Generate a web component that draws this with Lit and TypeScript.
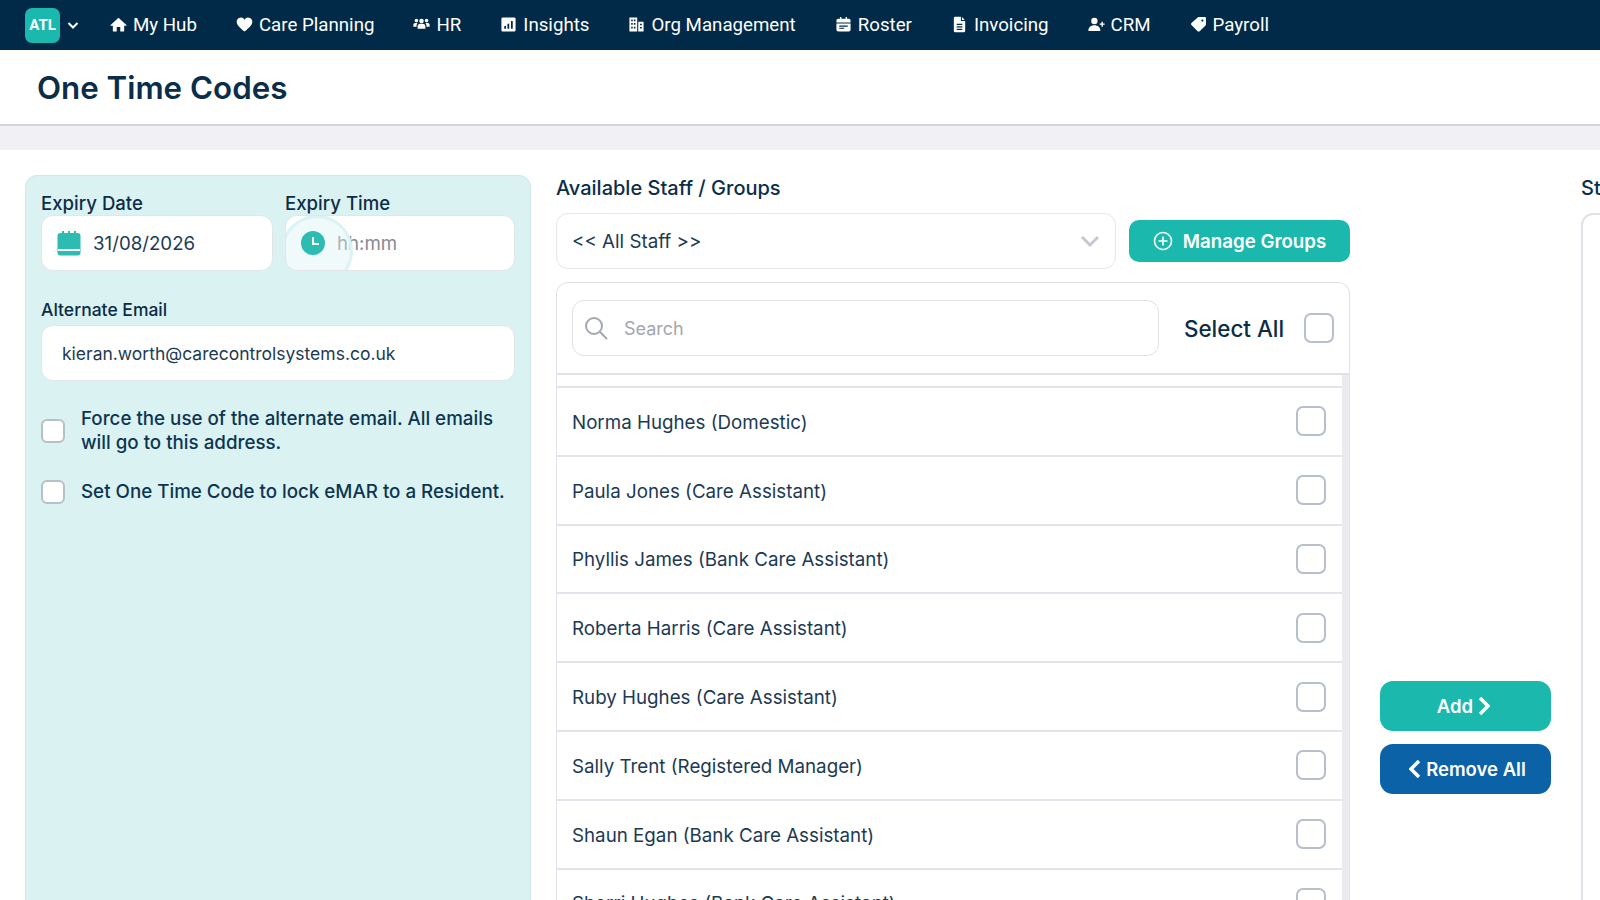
import { LitElement, html, css, svg } from 'lit';
import { customElement } from 'lit/decorators.js';

const navItems = [
  { label: 'My Hub', icon: svg`<path d="M12 2.500 0.800 12.600c-.4.400-.1 1 .4 1H4V21c0 .6.400 1 1 1h4.500v-6.500h5V22H19c.6 0 1-.4 1-1v-7.400h2.800c.5 0 .8-.6.400-1z"/>` },
  { label: 'Care Planning', icon: svg`<path d="M12 22C5 16.200 1 12.500 1 8a5.800 5.800 0 0 1 11-2.600A5.800 5.800 0 0 1 23 8c0 4.500-4 8.200-11 14z"/>` },
  { label: 'HR', icon: svg`<circle cx="12" cy="7" r="3.200"/><circle cx="4.800" cy="6.500" r="2.500"/><circle cx="19.200" cy="6.500" r="2.500"/><path d="M6.500 18v-3a4 4 0 0 1 4-4h3a4 4 0 0 1 4 4v3zM0.500 15v-2.500A2.500 2.500 0 0 1 3 10h3.500a5 5 0 0 0-1.500 3.500V15zM23.500 15v-2.500A2.500 2.500 0 0 0 21 10h-3.500a5 5 0 0 1 1.500 3.500V15z"/>` },
  { label: 'Insights', icon: svg`<path fill-rule="evenodd" d="M4 2h16a2 2 0 0 1 2 2v16a2 2 0 0 1-2 2H4a2 2 0 0 1-2-2V4a2 2 0 0 1 2-2zm2 12v4h2.500v-4zm4.500-3v7H13v-7zM15.500 7v11H18V7z"/>` },
  { label: 'Org Management', icon: svg`<path fill-rule="evenodd" d="M2 2h11v20H2zM14.500 8H22v14h-7.500zM4.500 5v2.500h2.200V5zm3.800 0v2.500h2.200V5zM4.500 10v2.500h2.200V10zm3.800 0v2.500h2.200V10zM4.500 15v2.500h2.200V15zm3.800 0v2.500h2.200V15zM17 11v2.200h2.500V11zm0 4.500v2.200h2.500v-2.200z"/>` },
  { label: 'Roster', icon: svg`<path fill-rule="evenodd" d="M7 1.500h2V4h6V1.500h2V4h2.500A2.500 2.500 0 0 1 22 6.500V9H2V6.500A2.500 2.500 0 0 1 4.500 4H7zM2 10.500h20V19.500a2.500 2.500 0 0 1-2.500 2.500h-15A2.500 2.500 0 0 1 2 19.500zM6 13.500V15h12v-1.500zm0 3V18h7v-1.500z"/>` },
  { label: 'Invoicing', icon: svg`<path fill-rule="evenodd" d="M6 1h8v6h6v14a2 2 0 0 1-2 2H6a2 2 0 0 1-2-2V3a2 2 0 0 1 2-2zm2 10v1.800h8V11zm0 3.500v1.800h8v-1.800zm0 3.500v1.800h8V18zM15.500 1.500 19.500 5.500h-4z"/>` },
  { label: 'CRM', icon: svg`<circle cx="9" cy="7" r="4.500"/><path d="M0.500 21c0-5 3.500-8 8.500-8s8.500 3 8.500 8zM19 8h2v2.500h2.500v2H21V15h-2v-2.500h-2.500v-2H19z"/>` },
  { label: 'Payroll', icon: svg`<path fill-rule="evenodd" d="M12.500 1.500H21a1.500 1.500 0 0 1 1.500 1.500v8.500c0 .8-.3 1.500-.9 2.100l-8 8a2 2 0 0 1-2.800 0L2 12.800a2 2 0 0 1 0-2.800l8.400-7.600c.6-.6 1.300-.9 2.100-.9zM17.500 5a1.500 1.500 0 1 0 0 3 1.500 1.500 0 0 0 0-3z"/>` },
];

const staff = [
  'Norma Hughes (Domestic)',
  'Paula Jones (Care Assistant)',
  'Phyllis James (Bank Care Assistant)',
  'Roberta Harris (Care Assistant)',
  'Ruby Hughes (Care Assistant)',
  'Sally Trent (Registered Manager)',
  'Shaun Egan (Bank Care Assistant)',
  'Sherri Hughes (Bank Care Assistant)',
];

@customElement('app-root')
export class AppRoot extends LitElement {
  static styles = css`
    :host {
      display: block;
      width: 1600px;
      height: 900px;
      overflow: hidden;
      background: #fff;
      color: #0c2d48;
      font-family: Inter, 'Noto Sans', sans-serif;
    }

    .nav {
      height: 50px;
      background: #002a47;
      display: flex;
      align-items: center;
      padding-left: 25px;
      font-family: Roboto, sans-serif;
      color: #fff;
    }

    .logo {
      width: 35px;
      height: 35px;
      border-radius: 7px;
      background: #1bb8ae;
      display: flex;
      align-items: center;
      justify-content: center;
      font-size: 15px;
      font-weight: 700;
    }

    .logo-caret {
      width: 12px;
      height: 12px;
      margin: 0 31px 0 7px;
      fill: none;
      stroke: #fff;
      stroke-width: 2;
    }

    .nav-items {
      display: flex;
      gap: 39px;
    }

    .nav-item {
      display: flex;
      align-items: center;
      gap: 6px;
      font-size: 18.7px;
      font-weight: 400;
      line-height: 24px;
    }

    .nav-item svg {
      width: 17px;
      height: 17px;
      fill: #fff;
      margin-top: -2px;
    }

    .title-bar {
      height: 74px;
      box-sizing: border-box;
      display: flex;
      align-items: center;
      padding: 2px 0 0 37px;
      font-family: Inter, sans-serif;
      font-size: 31.3px;
      font-weight: 600;
      color: #0c2d48;
    }

    .band {
      height: 26px;
      box-sizing: border-box;
      background: #f0f0f5;
      border-top: 2px solid #d3d4da;
    }

    .content {
      display: flex;
      padding: 25px 0 0 25px;
      height: 750px;
      box-sizing: border-box;
    }

    .panel {
      flex: 0 0 505px;
      box-sizing: border-box;
      height: 760px;
      background: #daf2f2;
      border: 1px solid #d0e8e9;
      border-radius: 12px;
      padding: 15px;
    }

    .date-row {
      display: grid;
      grid-template-columns: 232px 230px;
      gap: 12px;
    }

    .label {
      font-size: 18.6px;
      font-weight: 500;
      line-height: 24px;
      color: #0c2d48;
    }

    .field {
      height: 56px;
      box-sizing: border-box;
      background: #fff;
      border: 1px solid #e2e6ea;
      border-radius: 12px;
      display: flex;
      align-items: center;
      font-size: 18.7px;
      color: #1c3a54;
    }

    .date-field {
      padding-left: 15px;
      gap: 12px;
    }

    .date-field svg {
      width: 24px;
      height: 26px;
    }

    .time-field {
      padding-left: 15px;
      gap: 12px;
      position: relative;
      overflow: hidden;
      color: #868b91;
    }

    .time-field svg {
      width: 24px;
      height: 24px;
      position: relative;
      z-index: 1;
    }

    .ripple {
      position: absolute;
      left: -5px;
      top: -1px;
      width: 72px;
      height: 72px;
      box-sizing: border-box;
      border-radius: 50%;
      border: 3px solid rgba(218, 242, 242, 0.95);
      background: rgba(218, 242, 242, 0.4);
    }

    .email-label {
      margin-top: 27px;
      font-size: 17.5px;
    }

    .email-field {
      margin-top: 3px;
      padding-left: 20px;
      font-size: 17.5px;
    }

    .check-row {
      display: flex;
      gap: 16px;
      align-items: center;
      font-size: 18.75px;
      font-weight: 500;
      line-height: 23.5px;
      color: #0d3551;
    }

    .check-row.first {
      margin-top: 26px;
    }

    .check-row.second {
      margin-top: 26px;
    }

    .check {
      flex: none;
      width: 24px;
      height: 24px;
      box-sizing: border-box;
      background: #fff;
      border: 2px solid #b7bfcb;
      border-radius: 6px;
    }

    .check.large {
      width: 30px;
      height: 30px;
      border-radius: 7px;
    }

    .middle {
      flex: 0 0 794px;
      margin-left: 25px;
    }

    .col-label {
      font-size: 20px;
      font-weight: 500;
      line-height: 26px;
      color: #0c2d48;
    }

    .select-row {
      display: flex;
      align-items: center;
      gap: 13px;
      margin-top: 12px;
    }

    .select {
      flex: 1;
      height: 56px;
      box-sizing: border-box;
      border: 1px solid #e4e6ec;
      border-radius: 12px;
      display: flex;
      align-items: center;
      justify-content: space-between;
      padding: 0 15px;
      font-size: 18.75px;
      color: #1c3a54;
    }

    .select svg {
      width: 20px;
      height: 14px;
      fill: none;
      stroke: #c3c8d1;
      stroke-width: 3;
    }

    .manage {
      flex: 0 0 221px;
      height: 42px;
      background: #1bb8ae;
      border-radius: 10px;
      color: #fff;
      font-size: 18.7px;
      font-weight: 600;
      display: flex;
      align-items: center;
      justify-content: center;
      gap: 10px;
    }

    .manage svg {
      width: 20px;
      height: 20px;
      fill: none;
      stroke: #fff;
      stroke-width: 1.6;
    }

    .list {
      margin-top: 13px;
      border: 1px solid #e0e2e8;
      border-radius: 12px 12px 0 0;
      border-bottom: none;
    }

    .list-head {
      height: 92px;
      box-sizing: border-box;
      border-bottom: 2px solid #e0e2e8;
      display: flex;
      align-items: center;
      padding: 0 15px;
    }

    .search {
      flex: 0 0 587px;
      box-sizing: border-box;
      height: 56px;
      border: 1px solid #e0e2e8;
      border-radius: 12px;
      display: flex;
      align-items: center;
      gap: 16px;
      padding-left: 11px;
      font-size: 18px;
      color: #a2a7b0;
    }

    .search svg {
      width: 24px;
      height: 24px;
      fill: none;
      stroke: #a2a7b0;
      stroke-width: 2;
    }

    .select-all {
      margin-left: 25px;
      flex: 1;
      display: flex;
      align-items: center;
      justify-content: space-between;
      font-size: 22.4px;
      font-weight: 500;
      color: #0c2d48;
    }

    .list-body {
      display: flex;
    }

    .rows {
      flex: 1;
      padding-top: 11px;
    }

    .row {
      height: 68.8px;
      box-sizing: border-box;
      border-top: 2px solid #e2e4ea;
      display: flex;
      align-items: center;
      justify-content: space-between;
      padding: 0 16px 0 15px;
      font-size: 18.75px;
      color: #1c3a54;
    }

    .row span {
      margin-top: 2px;
    }

    .scrollbar {
      flex: 0 0 7px;
      background: #eaeaf1;
    }

    .actions {
      flex: 0 0 171px;
      margin-left: 30px;
      padding-top: 506px;
      display: flex;
      flex-direction: column;
      gap: 13px;
    }

    .action {
      height: 50px;
      border-radius: 13px;
      color: #fff;
      font-size: 18.5px;
      font-weight: 600;
      display: flex;
      align-items: center;
      justify-content: center;
      gap: 5px;
    }

    .action svg {
      width: 12px;
      height: 20px;
      fill: none;
      stroke: #fff;
      stroke-width: 3.5;
    }

    .add {
      background: #1bb8ae;
      padding-right: 4px;
    }

    .remove {
      background: #0b62a6;
      padding-left: 4px;
    }

    .selected {
      flex: 0 0 400px;
      margin-left: 30px;
    }

    .selected-box {
      margin-top: 12px;
      height: 700px;
      border: 2px solid #e0e2e8;
      border-radius: 12px;
    }
  `;

  render() {
    return html`
      <div class="nav">
        <div class="logo">ATL</div>
        <svg class="logo-caret" viewBox="0 0 12 12"><path d="M1.500 4 6 8.500 10.500 4" /></svg>
        <div class="nav-items">
          ${navItems.map(
            (item) => html`
              <div class="nav-item">
                <svg viewBox="0 0 24 24">${item.icon}</svg>
                <span>${item.label}</span>
              </div>
            `
          )}
        </div>
      </div>

      <div class="title-bar">One Time Codes</div>
      <div class="band"></div>

      <div class="content">
        <div class="panel">
          <div class="date-row">
            <div>
              <div class="label">Expiry Date</div>
              <div class="field date-field">
                <svg viewBox="0 0 24 26">
                  <rect x="0.500" y="3" width="23" height="22.500" rx="3" fill="#2cbcb1" />
                  <path d="M6 1v5M12 1v5M18 1v5" stroke="#2cbcb1" stroke-width="2" />
                  <path d="M1 20h22" stroke="#fff" stroke-width="2" />
                </svg>
                <span>31/08/2026</span>
              </div>
            </div>
            <div>
              <div class="label">Expiry Time</div>
              <div class="field time-field">
                <svg viewBox="0 0 24 24">
                  <circle cx="12" cy="12" r="12" fill="#2cbcb1" />
                  <path d="M12 6v7h6" fill="none" stroke="#fff" stroke-width="2" />
                </svg>
                <span>hh:mm</span>
                <div class="ripple"></div>
              </div>
            </div>
          </div>

          <div class="label email-label">Alternate Email</div>
          <div class="field email-field">kieran.worth@carecontrolsystems.co.uk</div>

          <div class="check-row first">
            <div class="check"></div>
            <div>Force the use of the alternate email. All emails will go to this address.</div>
          </div>
          <div class="check-row second">
            <div class="check"></div>
            <div>Set One Time Code to lock eMAR to a Resident.</div>
          </div>
        </div>

        <div class="middle">
          <div class="col-label">Available Staff / Groups</div>
          <div class="select-row">
            <div class="select">
              <span>&lt;&lt; All Staff &gt;&gt;</span>
              <svg viewBox="0 0 20 14"><path d="M2 3l8 8 8-8" /></svg>
            </div>
            <div class="manage">
              <svg viewBox="0 0 20 20">
                <circle cx="10" cy="10" r="8.500" />
                <path d="M10 5.500v9M5.500 10h9" />
              </svg>
              <span>Manage Groups</span>
            </div>
          </div>

          <div class="list">
            <div class="list-head">
              <div class="search">
                <svg viewBox="0 0 24 24">
                  <circle cx="10" cy="10" r="8" />
                  <path d="M16 16l7 7" />
                </svg>
                <span>Search</span>
              </div>
              <div class="select-all">
                <span>Select All</span>
                <div class="check large"></div>
              </div>
            </div>
            <div class="list-body">
              <div class="rows">
                ${staff.map(
                  (name) => html`
                    <div class="row">
                      <span>${name}</span>
                      <div class="check large"></div>
                    </div>
                  `
                )}
              </div>
              <div class="scrollbar"></div>
            </div>
          </div>
        </div>

        <div class="actions">
          <div class="action add">
            <span>Add</span>
            <svg viewBox="0 0 12 20"><path d="M2 2l8 8-8 8" /></svg>
          </div>
          <div class="action remove">
            <svg viewBox="0 0 12 20"><path d="M10 2l-8 8 8 8" /></svg>
            <span>Remove All</span>
          </div>
        </div>

        <div class="selected">
          <div class="col-label">Staff</div>
          <div class="selected-box"></div>
        </div>
      </div>
    `;
  }
}
